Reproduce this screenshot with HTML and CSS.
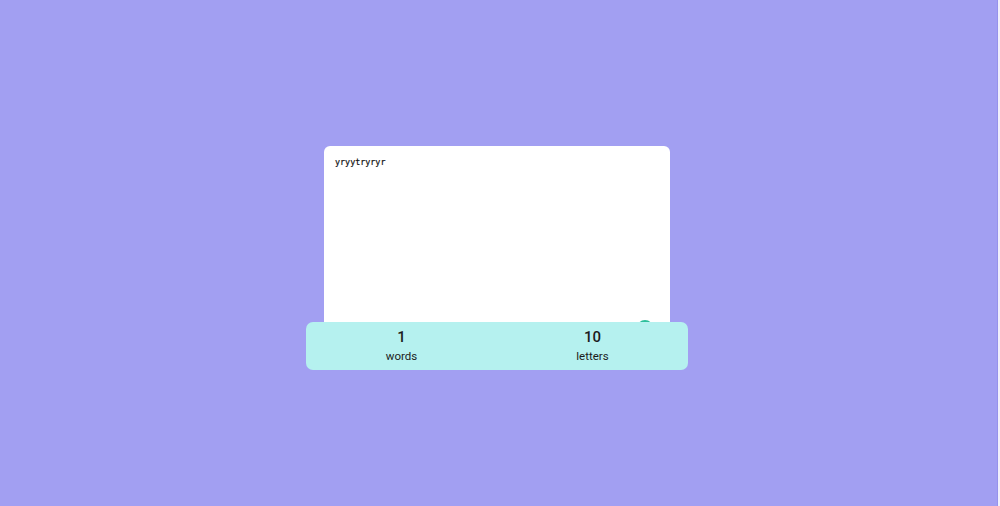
FILE: index.html
```html
<!DOCTYPE html>
<html>
<head>
<meta charset="utf-8">
<link rel="stylesheet" href="styles.css">
</head>
<body>
<div class="wrap">
  <div class="card">
    <div class="text">yryytryryr</div>
    <span class="dot"></span>
  </div>
  <div class="stats">
    <div class="stat"><div class="num">1</div><div class="lbl">words</div></div>
    <div class="stat"><div class="num">10</div><div class="lbl">letters</div></div>
  </div>
</div>
</body>
</html>
```
FILE: styles.css
```css
html { background: #f1f0fc; }
body {
  margin: 0 2px 0 0;
  height: 506px;
  background: #a29ff2;
  border-right: 1px solid #9692ec;
  font-family: Roboto, "Liberation Sans", sans-serif;
  overflow: hidden;
}
.wrap {
  display: flex;
  flex-direction: column;
  align-items: center;
  padding-top: 146px;
  padding-right: 3px;
}
.card {
  position: relative;
  width: 346px;
  height: 186px;
  background: #fff;
  border-radius: 6px;
  box-sizing: border-box;
  padding: 11px 11px;
}
.text {
  font-family: "DejaVu Sans Mono", monospace;
  font-size: 8.4px;
  color: #111;
  -webkit-text-stroke: 0.2px #111;
}
.dot {
  position: absolute;
  right: 17px;
  top: 174px;
  width: 16px;
  height: 16px;
  border-radius: 50%;
  background: #2dbf9b;
}
.stats {
  position: relative;
  margin-top: -10px;
  width: 382px;
  height: 48px;
  background: #b5f1ef;
  border-radius: 7px;
  display: grid;
  grid-template-columns: 1fr 1fr;
  text-align: center;
  color: #1c1c1c;
}
.stat { padding-top: 6px; }
.num { font-size: 15px; font-weight: 500; line-height: 18px; }
.lbl { font-size: 11.5px; line-height: 16px; margin-top: 2px; }
```
